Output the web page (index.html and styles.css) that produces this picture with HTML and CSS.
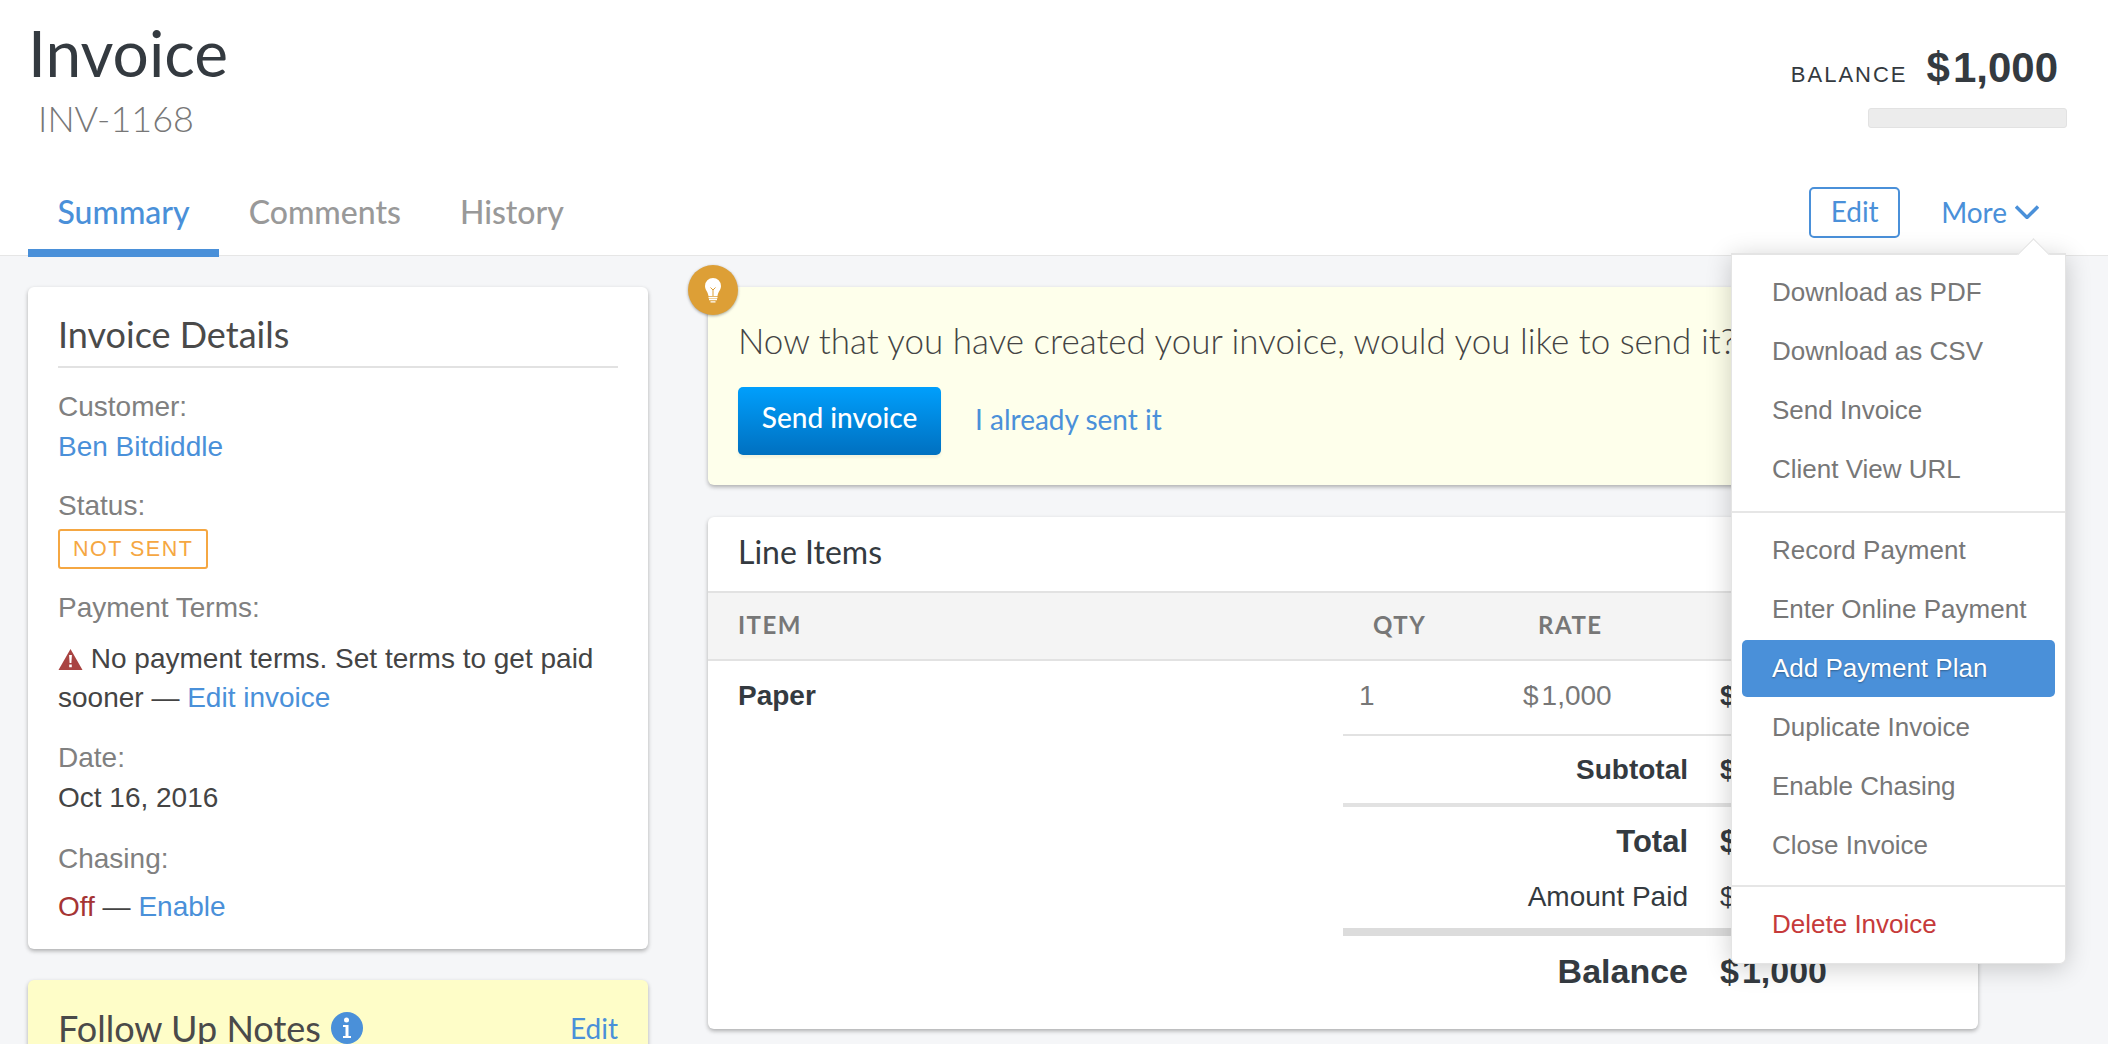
FILE: index.html
```html
<!DOCTYPE html>
<html lang="en">
<head>
    <meta charset="UTF-8">
    <title>Invoice INV-1168</title>
    <link rel="stylesheet" href="styles.css">
</head>
<body>
    <header class="page-header">
        <div class="title-row">
            <div class="title-block">
                <h1>Invoice</h1>
                <div class="invoice-number">INV-1168</div>
            </div>
            <div class="balance-block">
                <div class="balance-line">
                    <span class="balance-label">BALANCE</span>
                    <span class="balance-amount"><span class="dollar">$</span>1,000</span>
                </div>
                <div class="balance-bar"></div>
            </div>
        </div>
        <div class="tab-row">
            <nav class="tabs">
                <a class="tab active">Summary</a>
                <a class="tab">Comments</a>
                <a class="tab">History</a>
            </nav>
            <div class="actions">
                <a class="edit-button">Edit</a>
                <a class="more-link">More
                    <svg class="chevron" viewBox="0 0 24 14" width="24" height="14"><path d="M1 1.500l11 11 11-11" fill="none" stroke="#4a90d9" stroke-width="3.400"/></svg>
                </a>
            </div>
        </div>
    </header>

    <main class="content">
        <aside class="sidebar">
            <section class="card details">
                <h2>Invoice Details</h2>
                <div class="field">
                    <div class="field-label">Customer:</div>
                    <a class="link">Ben Bitdiddle</a>
                </div>
                <div class="field">
                    <div class="field-label">Status:</div>
                    <span class="status-badge">NOT SENT</span>
                </div>
                <div class="field terms-field">
                    <div class="field-label">Payment Terms:</div>
                    <p class="terms-text">
                        <svg class="warn-icon" viewBox="0 0 24 21" width="25" height="21"><path d="M12 0L24 21H0z" fill="#a94442"/><path d="M10.600 6h2.800l-.5 8h-1.800zM10.700 15.500h2.600v2.800h-2.600z" fill="#fff"/></svg>
                        No payment terms. Set terms to get paid sooner &mdash; <a class="link">Edit invoice</a>
                    </p>
                </div>
                <div class="field date-field">
                    <div class="field-label">Date:</div>
                    <div>Oct 16, 2016</div>
                </div>
                <div class="field chasing-field">
                    <div class="field-label">Chasing:</div>
                    <div class="chasing-value"><span class="off">Off</span> &mdash; <a class="link">Enable</a></div>
                </div>
            </section>
            <section class="card notes">
                <h2 class="notes-title">Follow Up Notes
                    <svg class="info-icon" viewBox="0 0 32 32" width="32" height="32"><circle cx="16" cy="16" r="16" fill="#4a90d9"/><circle cx="15.500" cy="8" r="2.500" fill="#fff"/><path d="M12 13h5.500v11H20v2h-8v-2h2.500v-9H12z" fill="#fff"/></svg>
                </h2>
                <a class="notes-edit">Edit</a>
            </section>
        </aside>

        <div class="main-column">
            <section class="card notice">
                <span class="notice-badge">
                    <svg viewBox="0 0 16 25" width="16" height="25">
                        <path d="M8 0a8 8 0 0 0-8 8c0 3.800 2.800 5.500 3.500 10h9C13.200 13.500 16 11.800 16 8a8 8 0 0 0-8-8z" fill="#fff"/>
                        <path d="M5.500 9.500L8 12l2.500-2.500M8 12v6" fill="none" stroke="#dd9f36" stroke-width="1"/>
                        <path d="M3.500 19.500h9M4 21.500h8M5.500 23.800h5" stroke="#fff" stroke-width="1.300"/>
                    </svg>
                </span>
                <p class="notice-text">Now that you have created your invoice, would you like to send it?</p>
                <div class="notice-actions">
                    <a class="send-button">Send invoice</a>
                    <a class="already-link">I already sent it</a>
                </div>
            </section>

            <section class="card line-items">
                <h3>Line Items</h3>
                <div class="table-row table-head">
                    <div class="col-item">ITEM</div>
                    <div class="col-qty">QTY</div>
                    <div class="col-rate">RATE</div>
                </div>
                <div class="table-row table-line">
                    <div class="col-item item-name">Paper</div>
                    <div class="col-qty">1</div>
                    <div class="col-rate"><span class="dollar">$</span>1,000</div>
                    <div class="strong"><span class="dollar">$</span>1,000</div>
                </div>
                <div class="totals">
                    <div class="total-row subtotal">
                        <span class="total-label">Subtotal</span><span><span class="dollar">$</span>1,000</span>
                    </div>
                    <div class="total-row total">
                        <span class="total-label">Total</span><span><span class="dollar">$</span>1,000</span>
                    </div>
                    <div class="total-row paid">
                        <span class="total-label">Amount Paid</span><span><span class="dollar">$</span>0</span>
                    </div>
                    <div class="total-row balance">
                        <span class="total-label">Balance</span><span><span class="dollar">$</span>1,000</span>
                    </div>
                </div>
            </section>
        </div>
    </main>

    <div class="more-menu">
        <ul class="menu-group">
            <li>Download as PDF</li>
            <li>Download as CSV</li>
            <li>Send Invoice</li>
            <li>Client View URL</li>
        </ul>
        <ul class="menu-group middle">
            <li>Record Payment</li>
            <li>Enter Online Payment</li>
            <li class="selected">Add Payment Plan</li>
            <li>Duplicate Invoice</li>
            <li>Enable Chasing</li>
            <li>Close Invoice</li>
        </ul>
        <ul class="menu-group">
            <li class="danger">Delete Invoice</li>
        </ul>
    </div>
</body>
</html>
```

FILE: styles.css
```css
html, body {
    height: 100%;
    margin: 0;
    overflow: hidden;
}
body {
    position: relative;
    background: #f5f6f8;
    color: #444;
    font-family: "Liberation Sans", Arial, sans-serif;
    font-size: 28px;
    line-height: 40px;
}
a {
    cursor: pointer;
}
.dollar {
    margin-right: 3px;
}

/* header */
.page-header {
    height: 256px;
    box-sizing: border-box;
    padding: 0 28px;
    background: #fff;
    border-bottom: 1px solid #e6e6e6;
}
.title-row {
    display: flex;
    justify-content: space-between;
    height: 184px;
}
h1 {
    margin: 17px 0 0;
    color: #343a40;
    font-family: Lato, sans-serif;
    font-size: 64px;
    font-weight: 400;
    line-height: 72px;
}
.invoice-number {
    margin: 9px 0 0 10px;
    color: #777;
    font-family: Lato, sans-serif;
    font-size: 36px;
    font-weight: 300;
    line-height: 40px;
}
.balance-block {
    display: flex;
    flex-direction: column;
    align-items: flex-end;
    padding: 48px 13px 0 0;
}
.balance-line {
    display: flex;
    align-items: baseline;
    gap: 19px;
    margin-right: 9px;
    color: #343a40;
}
.balance-label {
    font-size: 22px;
    letter-spacing: 2px;
}
.balance-amount {
    font-size: 42px;
    font-weight: 700;
}
.balance-bar {
    width: 199px;
    height: 20px;
    margin-top: 13px;
    box-sizing: border-box;
    background: #ececec;
    border: 1px solid #e2e2e2;
    border-radius: 3px;
}
.tab-row {
    display: flex;
    justify-content: space-between;
    height: 72px;
}
.tabs {
    display: flex;
}
.tab {
    padding: 0 29.500px;
    height: 65px;
    color: #999;
    font-family: Lato, sans-serif;
    font-size: 32px;
    font-weight: 500;
    line-height: 56px;
}
.tab.active {
    color: #4a90d9;
    border-bottom: 8px solid #4a90d9;
}
.actions {
    display: flex;
    align-items: flex-start;
    padding: 3px 41px 0 0;
    color: #4a90d9;
    font-family: Lato, sans-serif;
    font-size: 28px;
}
.edit-button {
    width: 91px;
    height: 51px;
    box-sizing: border-box;
    border: 2px solid #4a90d9;
    border-radius: 5px;
    text-align: center;
    line-height: 45px;
}
.more-link {
    display: flex;
    align-items: center;
    gap: 8px;
    height: 49px;
    margin-left: 41px;
}

/* page body */
.content {
    display: grid;
    grid-template-columns: 620px 1270px;
    gap: 60px;
    padding: 31px 28px 0;
}
.card {
    background: #fff;
    border-radius: 6px;
    box-shadow: 0 2px 4px rgba(0, 0, 0, 0.3);
}
.sidebar {
    display: flex;
    flex-direction: column;
    gap: 31px;
}
.details {
    height: 662px;
    box-sizing: border-box;
    padding: 27px 30px 0;
}
h2 {
    margin: 0;
    padding-bottom: 12px;
    color: #4a4a4a;
    font-family: Lato, sans-serif;
    font-size: 36px;
    font-weight: 400;
    line-height: 40px;
    border-bottom: 2px solid #e2e2e2;
}
.field {
    margin-top: 19px;
}
.field-label {
    color: #808080;
}
.status-badge {
    display: inline-block;
    box-sizing: border-box;
    height: 40px;
    margin-top: 3px;
    padding: 0 13px;
    color: #f5a742;
    border: 2px solid #f5a742;
    border-radius: 3px;
    font-size: 21.500px;
    letter-spacing: 1.500px;
    line-height: 36px;
    vertical-align: top;
}
.terms-text {
    margin: 0;
    padding-top: 11px;
    line-height: 39px;
}
.warn-icon {
    vertical-align: -2px;
}
.date-field {
    margin-top: 21px;
}
.chasing-field {
    margin-top: 21px;
}
.link {
    color: #4a90d9;
}
.chasing-value {
    margin-top: 8px;
}
.off {
    color: #a53434;
}
.notes {
    display: flex;
    justify-content: space-between;
    padding: 28px 30px;
    background: #fefdc8;
}
.notes-title {
    display: flex;
    align-items: center;
    gap: 10px;
    padding: 0;
    border: 0;
}
.notes-edit {
    color: #4a90d9;
    font-family: Lato, sans-serif;
    font-size: 28px;
}

/* main column */
.main-column {
    display: flex;
    flex-direction: column;
    gap: 32px;
}
.notice {
    position: relative;
    height: 198px;
    box-sizing: border-box;
    padding: 31px 30px 0;
    background: #feffeb;
}
.notice-badge {
    position: absolute;
    top: -22px;
    left: -20px;
    display: flex;
    align-items: center;
    justify-content: center;
    width: 50px;
    height: 50px;
    background: #dd9f36;
    border-radius: 50%;
    box-shadow: 0 1px 3px rgba(0, 0, 0, 0.35);
}
.notice-text {
    margin: 0;
    color: #444;
    font-family: Lato, sans-serif;
    font-size: 35px;
    font-weight: 300;
    line-height: 44px;
    white-space: nowrap;
}
.notice-actions {
    display: flex;
    align-items: center;
    gap: 34px;
    margin-top: 25px;
}
.send-button {
    width: 203px;
    height: 68px;
    color: #fff;
    background: linear-gradient(#009ffc, #0070c0);
    border-radius: 5px;
    box-shadow: 0 3px 3px rgba(0, 0, 0, 0.05);
    font-family: Lato, sans-serif;
    font-size: 28px;
    font-weight: 500;
    line-height: 60px;
    text-align: center;
}
.already-link {
    padding-bottom: 4px;
    color: #4a90d9;
    font-family: Lato, sans-serif;
    font-size: 28px;
}
.line-items {
    height: 512px;
}
h3 {
    margin: 0;
    padding: 0 30px;
    height: 74px;
    color: #343a40;
    font-family: Lato, sans-serif;
    font-size: 32px;
    font-weight: 400;
    line-height: 70px;
}
.table-row {
    display: flex;
    padding-left: 30px;
}
.col-item {
    width: 635px;
}
.col-qty {
    width: 165px;
}
.col-rate {
    width: 182px;
}
.table-head {
    height: 70px;
    box-sizing: border-box;
    color: #777;
    background: #f4f4f4;
    border-top: 2px solid #e2e2e2;
    border-bottom: 2px solid #e2e2e2;
    font-family: Lato, sans-serif;
    font-size: 24px;
    font-weight: 700;
    letter-spacing: 1.500px;
    line-height: 64px;
}
.table-line {
    height: 73px;
    color: #777;
    line-height: 70px;
}
.item-name {
    color: #343a40;
    font-weight: 700;
}
.table-line .col-qty {
    margin-left: -14px;
    margin-right: 14px;
}
.table-line .col-rate {
    margin-left: -15px;
    margin-right: 15px;
}
.strong {
    color: #343a40;
    font-weight: 700;
}
.totals {
    margin: 0 30px 0 635px;
    border-top: 2px solid #e2e2e2;
}
.total-row {
    display: flex;
    gap: 32px;
    color: #343a40;
}
.total-label {
    width: 345px;
    text-align: right;
}
.subtotal {
    height: 67px;
    align-items: center;
    font-weight: 700;
    border-bottom: 4px solid #e2e2e2;
}
.total {
    height: 70px;
    align-items: center;
    font-size: 31px;
    font-weight: 700;
}
.paid {
    height: 51px;
    align-items: flex-start;
    border-bottom: 8px solid #dcdcdc;
}
.balance {
    height: 70px;
    align-items: center;
    font-size: 34px;
    font-weight: 700;
}

/* dropdown */
.more-menu {
    position: absolute;
    top: 253px;
    left: 1731px;
    width: 335px;
    box-sizing: border-box;
    background: #fff;
    border: 1px solid #e4e4e4;
    border-top-width: 2px;
    border-radius: 0 0 6px 6px;
    box-shadow: 0 4px 26px rgba(0, 0, 0, 0.2);
    color: #777;
    font-size: 26px;
}
.more-menu::before {
    content: "";
    position: absolute;
    top: -12px;
    right: 20px;
    width: 22px;
    height: 22px;
    background: #fff;
    border-top: 1px solid #e2e2e2;
    border-left: 1px solid #e2e2e2;
    transform: rotate(45deg);
}
.menu-group {
    position: relative;
    margin: 0;
    padding: 8px 10px 12px;
    list-style: none;
    border-bottom: 2px solid #e6e6e6;
}
.menu-group.middle {
    padding-bottom: 10px;
}
.menu-group:last-child {
    border-bottom: 0;
    padding-bottom: 9px;
}
.menu-group li {
    height: 59px;
    padding-left: 30px;
    line-height: 59px;
}
.menu-group .selected {
    height: 57px;
    margin: 1px 0;
    color: #fff;
    background: #4a90d9;
    border-radius: 5px;
    line-height: 57px;
    text-shadow: 0 1px 2px rgba(0, 0, 0, 0.35);
}
.menu-group .danger {
    color: #c63a3a;
}
```
